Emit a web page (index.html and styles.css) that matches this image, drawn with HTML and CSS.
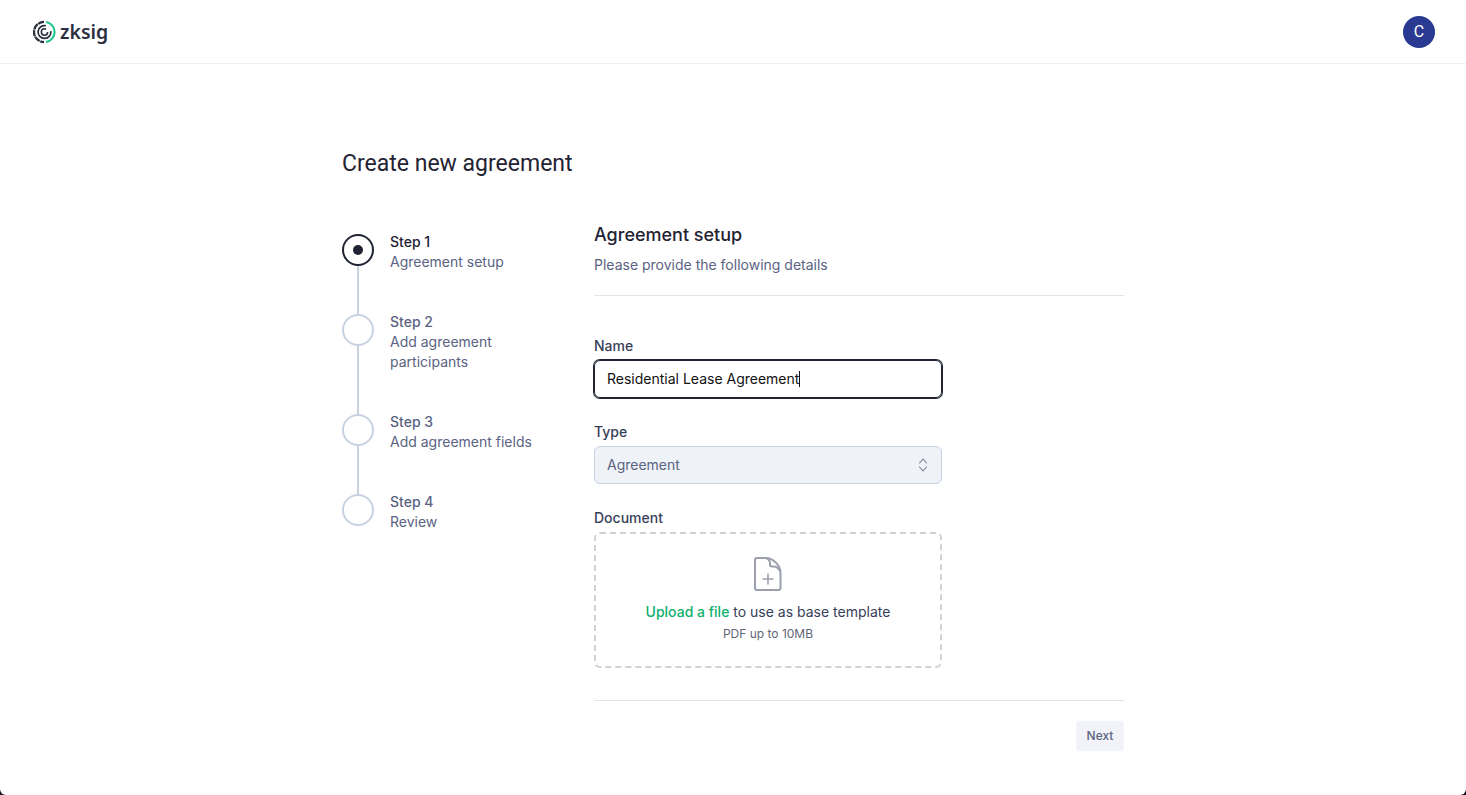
FILE: index.html
```html
<!DOCTYPE html>
<html lang="en">
<head>
    <meta charset="UTF-8">
    <meta name="viewport" content="width=device-width, initial-scale=1.0">
    <title>Create new agreement</title>
    <link rel="stylesheet" href="styles.css">
</head>
<body>
    <div class="page">
        <header class="topbar">
            <a class="logo" href="#">
                <svg width="23" height="24" viewBox="0 0 24 24" fill="none">
                    <path d="M11.500 1.500A10.500 10.500 0 0 0 11.500 22.500" stroke="#2b2f3f" stroke-width="2.400" stroke-dasharray="6.500 .7"/>
                    <path d="M13.500 1.600A10.500 10.500 0 0 1 13.500 22.400" stroke="#22c58b" stroke-width="2.200"/>
                    <path d="M13.500 5.500A6.700 6.700 0 1 0 18.600 11" stroke="#2b2f3f" stroke-width="1.800"/>
                    <circle cx="12" cy="12" r="3.300" stroke="#2b2f3f" stroke-width="1.600" stroke-dasharray="17 3.700"/>
                </svg>
                <span>zksig</span>
            </a>
            <div class="avatar">C</div>
        </header>

        <main class="content">
            <h1>Create new agreement</h1>

            <div class="columns">
                <ol class="steps">
                    <li class="step current">
                        <span class="dot"></span>
                        <div><strong>Step 1</strong>Agreement setup</div>
                    </li>
                    <li class="step">
                        <span class="dot"></span>
                        <div><strong>Step 2</strong>Add agreement<br>participants</div>
                    </li>
                    <li class="step">
                        <span class="dot"></span>
                        <div><strong>Step 3</strong>Add agreement fields</div>
                    </li>
                    <li class="step last">
                        <span class="dot"></span>
                        <div><strong>Step 4</strong>Review</div>
                    </li>
                </ol>

                <section class="panel">
                    <div class="panel-head">
                        <h2>Agreement setup</h2>
                        <p>Please provide the following details</p>
                    </div>

                    <div class="fields">
                        <div class="field">
                            <label>Name</label>
                            <div class="control focused">Residential Lease Agreement<span class="caret"></span></div>
                        </div>
                        <div class="field">
                            <label>Type</label>
                            <div class="control disabled">
                                Agreement
                                <svg width="20" height="20" viewBox="0 0 20 20" fill="none" stroke="#7b8194" stroke-width="1.100" stroke-linecap="round" stroke-linejoin="round">
                                    <path d="M6.500 8L10 4l3.500 4"/>
                                    <path d="M6.500 12l3.500 4 3.500-4"/>
                                </svg>
                            </div>
                        </div>
                        <div class="field">
                            <label>Document</label>
                            <div class="dropzone">
                                <svg width="36" height="36" viewBox="0 0 36 36" fill="none" stroke="#9ca0ae" stroke-width="2" stroke-linecap="round" stroke-linejoin="round">
                                    <path d="M7 2h9c7 0 14.500 7.500 14.500 14.500V32a2 2 0 0 1-2 2H7a2 2 0 0 1-2-2V4a2 2 0 0 1 2-2z"/>
                                    <path d="M16 2c2.500 1 4 3 4 5v1.500a2 2 0 0 0 2 2h2c2 0 4.500 2 6 4.500"/>
                                    <path d="M18 18v10M13 23h10" stroke-width="1.600"/>
                                </svg>
                                <p class="upload"><a href="#">Upload a file</a> to use as base template</p>
                                <p class="hint">PDF up to 10MB</p>
                            </div>
                        </div>
                    </div>

                    <div class="actions">
                        <button>Next</button>
                    </div>
                </section>
            </div>
        </main>
    </div>
</body>
</html>
```

FILE: styles.css
```css
* {
    box-sizing: border-box;
}

html {
    background-color: #17151f; /* window corners */
}

body {
    margin: 0;
    font-family: Inter, "Liberation Sans", sans-serif;
    font-size: 14px;
    line-height: 20px;
    color: #1f2333;
}

.page {
    height: 795px;
    overflow: hidden;
    background-color: #fff;
    border-radius: 0 0 6px 6px;
}

.topbar {
    display: flex;
    justify-content: space-between;
    align-items: center;
    height: 64px;
    padding: 0 31px 0 33px;
    border-bottom: 1px solid #eef0f3;
}

.logo {
    display: flex;
    align-items: center;
    gap: 4px;
    color: #2b2f3f;
    text-decoration: none;
    font-family: "Noto Sans", sans-serif;
    font-size: 19.500px;
    line-height: 24px;
    font-weight: 600;
}

.avatar {
    display: flex;
    justify-content: center;
    align-items: center;
    width: 32px;
    height: 32px;
    border-radius: 50%;
    background-color: #2a3a92;
    color: #fff;
    font-family: Roboto, sans-serif;
    font-size: 16px;
}

.content {
    width: 782px;
    margin: 0 auto;
    padding-top: 84px;
}

h1 {
    margin: 0 0 54px;
    font-family: Roboto, sans-serif;
    font-size: 23px;
    line-height: 32px;
    font-weight: 400;
    color: #1f2333;
}

.columns {
    display: flex;
}

.steps {
    width: 252px;
    margin: 0;
    padding: 0;
    list-style: none;
    color: #5a6382;
}

.step {
    position: relative;
    display: flex;
    gap: 16px;
    padding-bottom: 42px;
}

.step strong {
    display: block;
    font-weight: 500;
}

.step > div {
    margin-top: -2px;
}

.step::before {
    content: "";
    position: absolute;
    top: 32px;
    bottom: 0;
    left: 15px;
    width: 2px;
    background-color: #c8d2e3;
}

.step.last::before {
    display: none;
}

.step.current strong {
    color: #1f2333;
}

.dot {
    display: flex;
    justify-content: center;
    align-items: center;
    flex: none;
    width: 32px;
    height: 32px;
    border: 2px solid #c8d2e3;
    border-radius: 50%;
    background-color: #fff;
}

.current .dot {
    border-color: #1f2333;
}

.current .dot::after {
    content: "";
    width: 10px;
    height: 10px;
    border-radius: 50%;
    background-color: #1f2333;
}

.panel {
    width: 530px;
}

.panel-head {
    height: 73px;
    margin-top: -11px;
    border-bottom: 1px solid #e2e4e8;
}

h2 {
    margin: 0 0 8px;
    font-size: 18px;
    line-height: 24px;
    font-weight: 500;
}

.panel-head p {
    margin: 0;
    color: #5a6382;
}

.fields {
    display: flex;
    flex-direction: column;
    gap: 24px;
    padding: 40px 0 32px;
    border-bottom: 1px solid #e2e4e8;
}

label {
    display: block;
    margin-bottom: 4px;
    font-weight: 500;
    color: #374059;
}

.control {
    display: flex;
    align-items: center;
    justify-content: space-between;
    width: 348px;
    height: 38px;
    padding: 0 8px 0 12px;
    border: 1px solid #c8d2e3;
    border-radius: 6px;
}

.control.focused {
    justify-content: flex-start;
    border-color: #1f2333;
    box-shadow: 0 0 0 1px #1f2333;
    color: #111;
}

.control.disabled {
    background-color: #eff2f7;
    color: #5a6382;
}

.caret {
    width: 1px;
    height: 16px;
    background-color: #111;
}

.dropzone {
    display: flex;
    flex-direction: column;
    align-items: center;
    width: 348px;
    height: 136px;
    padding-top: 22px;
    border: 2px dashed #cfd2d8;
    border-radius: 6px;
}

.dropzone p {
    margin: 0;
}

.dropzone .upload {
    margin-top: 10px;
    color: #374059;
}

.upload a {
    color: #0fb06e;
    font-weight: 500;
    text-decoration: none;
}

.dropzone .hint {
    margin-top: 2px;
    font-size: 12px;
    line-height: 20px;
    color: #5f6675;
}

.actions {
    display: flex;
    justify-content: flex-end;
    padding-top: 20px;
}

button {
    width: 48px;
    height: 30px;
    padding: 0 0 2px;
    border: none;
    border-radius: 4px;
    background-color: #f1f3f8;
    color: #5a6382;
    font-family: Inter, sans-serif;
    font-size: 12px;
    font-weight: 500;
}
```
